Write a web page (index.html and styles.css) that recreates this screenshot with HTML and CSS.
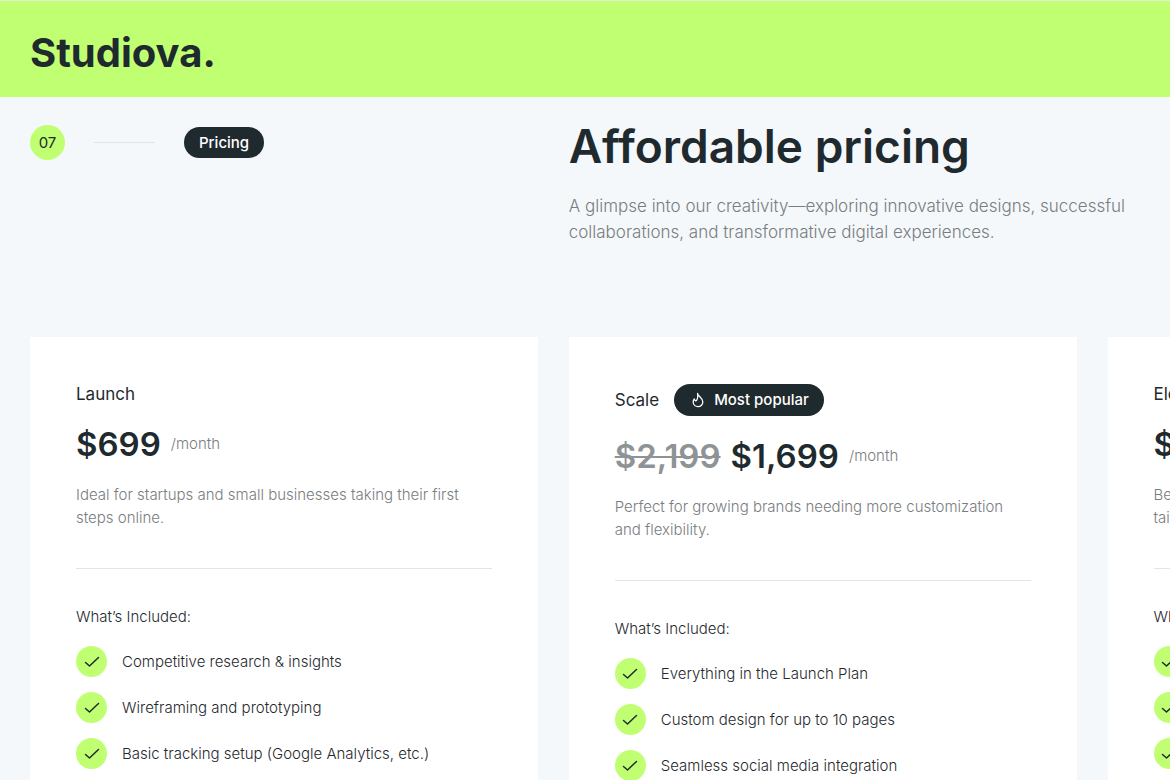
FILE: index.html
```html
<!DOCTYPE html>
<html lang="en">
<head>
<meta charset="utf-8">
<meta name="viewport" content="width=device-width, initial-scale=1">
<title>Studiova – Pricing</title>
<link rel="stylesheet" href="styles.css">
</head>
<body>
<svg class="sprite" aria-hidden="true">
  <symbol id="check" viewBox="0 0 16 16"><path d="M1.500 8.500 5.500 12 14.500 3.500"/></symbol>
  <symbol id="flame" viewBox="0 0 16 18"><path d="M7.500 1.500c.3 3.300 6 5 6 9.700a5.500 5.300 0 0 1-11 .2c0-1.500.4-2.600 1.200-3.600.3 1.100.9 1.800 1.800 2.200C8 8.600 8 5 7.500 1.500z"/></symbol>
</svg>
<header class="topbar">
  <a class="logo" href="#">Studiova.</a>
</header>
<main class="pricing">
  <section class="intro">
    <div class="marker">
      <span class="marker-number">07</span>
      <span class="marker-line"></span>
      <span class="badge">Pricing</span>
    </div>
    <div class="intro-copy">
      <h1 class="title">Affordable pricing</h1>
      <p class="lead">A glimpse into our creativity—exploring innovative designs, successful collaborations, and transformative digital experiences.</p>
    </div>
  </section>
  <section class="plans">
    <article class="plan">
      <div class="plan-head"><h2 class="plan-name">Launch</h2></div>
      <p class="price"><strong class="amount">$699</strong><span class="period">/month</span></p>
      <p class="summary">Ideal for startups and small businesses taking their first steps online.</p>
      <hr class="rule">
      <h3 class="included">What’s Included:</h3>
      <ul class="features">
        <li class="feature"><span class="tick"><svg class="tick-icon"><use href="#check"/></svg></span>Competitive research &amp; insights</li>
        <li class="feature"><span class="tick"><svg class="tick-icon"><use href="#check"/></svg></span>Wireframing and prototyping</li>
        <li class="feature"><span class="tick"><svg class="tick-icon"><use href="#check"/></svg></span>Basic tracking setup (Google Analytics, etc.)</li>
      </ul>
    </article>
    <article class="plan">
      <div class="plan-head"><h2 class="plan-name">Scale</h2><span class="badge badge-popular"><svg class="flame-icon"><use href="#flame"/></svg>Most popular</span></div>
      <p class="price"><del class="amount amount-old">$2,199</del><strong class="amount">$1,699</strong><span class="period">/month</span></p>
      <p class="summary">Perfect for growing brands needing more customization and flexibility.</p>
      <hr class="rule">
      <h3 class="included">What’s Included:</h3>
      <ul class="features">
        <li class="feature"><span class="tick"><svg class="tick-icon"><use href="#check"/></svg></span>Everything in the Launch Plan</li>
        <li class="feature"><span class="tick"><svg class="tick-icon"><use href="#check"/></svg></span>Custom design for up to 10 pages</li>
        <li class="feature"><span class="tick"><svg class="tick-icon"><use href="#check"/></svg></span>Seamless social media integration</li>
      </ul>
    </article>
    <article class="plan">
      <div class="plan-head"><h2 class="plan-name">Elevate</h2></div>
      <p class="price"><strong class="amount">$3,499</strong><span class="period">/month</span></p>
      <p class="summary">Best suited for established businesses wanting a fully tailored experience.</p>
      <hr class="rule">
      <h3 class="included">What’s Included:</h3>
      <ul class="features">
        <li class="feature"><span class="tick"><svg class="tick-icon"><use href="#check"/></svg></span>Everything in the Scale Plan</li>
        <li class="feature"><span class="tick"><svg class="tick-icon"><use href="#check"/></svg></span>E-commerce functionality</li>
        <li class="feature"><span class="tick"><svg class="tick-icon"><use href="#check"/></svg></span>Branding and logo design</li>
      </ul>
    </article>
  </section>
</main>
</body>
</html>
```
FILE: styles.css
```css
* { box-sizing: border-box; }

:root {
  --ink: #1f2a2e;
  --lime: #c1ff72;
  --muted: #787d80;
  --column: 43.4vw;
}

body {
  margin: 0;
  background: #f4f8fb;
  color: var(--ink);
  font: 400 16px/26px Inter, "Open Sans", sans-serif;
}

h1, h2, h3, p, ul { margin: 0; padding: 0; }

.sprite { display: none; }

svg {
  fill: none;
  stroke: currentColor;
  stroke-linecap: round;
  stroke-linejoin: round;
}

.topbar {
  display: flex;
  align-items: center;
  height: 97px;
  padding: 8px 30px 0;
  border-top: 1px solid #e4eadf;
  background: var(--lime);
}

.logo {
  color: var(--ink);
  font-size: 40px;
  font-weight: 700;
  line-height: 48px;
  text-decoration: none;
}

.pricing { padding: 24px 0 0 30px; }

.intro,
.plans {
  display: grid;
  grid-template-columns: var(--column) 1fr;
  column-gap: 31px;
}

.marker {
  display: flex;
  align-items: center;
  align-self: start;
  gap: 29px;
  padding-top: 4px;
}

.marker-number {
  width: 35px;
  border-radius: 50%;
  background: var(--lime);
  font-size: 15px;
  line-height: 35px;
  text-align: center;
}

.marker-line {
  width: 61px;
  height: 1px;
  background: #e0e5e8;
}

.badge {
  display: inline-flex;
  align-items: center;
  gap: 9px;
  padding: 0 15px;
  border-radius: 16px;
  background: var(--ink);
  color: #fff;
  font-size: 15px;
  font-weight: 500;
  line-height: 31px;
}

.badge-popular {
  margin: 1px 0;
  padding-left: 17px;
  line-height: 32px;
}

.flame-icon { width: 14px; height: 16px; stroke-width: 1.5; }

.title {
  font-size: 46px;
  font-weight: 600;
  line-height: 50px;
}

.lead {
  max-width: 570px;
  margin-top: 22px;
  color: var(--muted);
  font-size: 17px;
  font-weight: 300;
}

.plans {
  grid-template-columns: repeat(3, var(--column));
  overflow: hidden;
  margin-top: 92px;
}

.plan {
  padding: 46px;
  background: #fff;
}

.plan-head {
  display: flex;
  align-items: center;
  gap: 15px;
}

.plan-name {
  font-size: 17px;
  font-weight: 400;
  line-height: 22px;
}

.price {
  display: flex;
  align-items: center;
  gap: 10px;
  margin-top: 17px;
}

.amount {
  font-size: 33px;
  font-weight: 600;
  line-height: 44px;
}

.amount-old {
  opacity: 0.5;
  text-decoration-thickness: 2px;
}

.period {
  color: var(--muted);
  font-size: 15px;
  font-weight: 300;
}

.summary {
  margin-top: 17px;
  color: var(--muted);
  font-size: 15px;
  font-weight: 300;
  line-height: 23px;
}

.rule {
  height: 1px;
  margin: 39px 0 0;
  border: 0;
  background: #e2e4e6;
}

.included {
  margin-top: 37px;
  font-size: 15px;
  font-weight: 300;
  line-height: 22px;
}

.features {
  display: grid;
  gap: 15px;
  margin-top: 18px;
  list-style: none;
}

.feature {
  display: flex;
  align-items: center;
  gap: 15px;
  font-size: 15px;
  font-weight: 300;
  line-height: 31px;
}

.tick {
  display: grid;
  place-items: center;
  width: 31px;
  height: 31px;
  border-radius: 50%;
  background: var(--lime);
}

.tick-icon { width: 16px; height: 16px; stroke-width: 1.5; }
```
